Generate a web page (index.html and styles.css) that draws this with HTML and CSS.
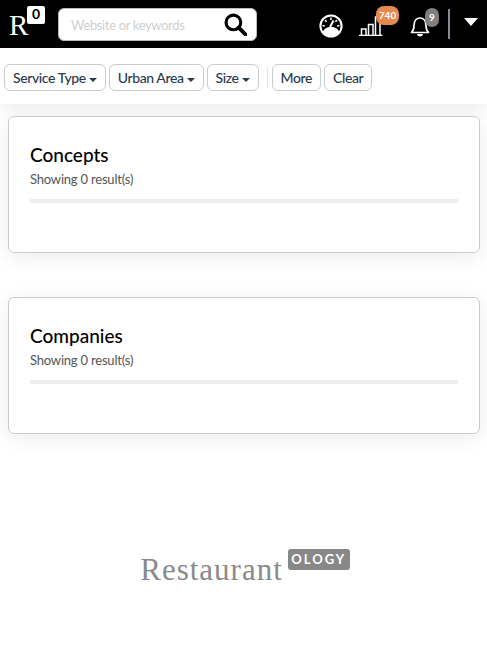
FILE: index.html
```html
<!DOCTYPE html>
<html lang="en">
<head>
    <meta charset="UTF-8">
    <meta name="viewport" content="width=device-width, initial-scale=1.0">
    <title>Restaurantology</title>
    <link rel="stylesheet" href="styles.css">
</head>
<body>
    <header class="topbar">
        <div class="brand">
            <span class="brand-letter">R</span>
            <span class="brand-count">0</span>
        </div>
        <div class="search">
            <span class="search-text">Website or keywords</span>
            <svg class="search-icon" width="23" height="23" viewBox="0 0 22 22">
                <circle cx="9" cy="9" r="7" fill="none" stroke="#000" stroke-width="3"/>
                <path d="M14 14l6.5 6.5" stroke="#000" stroke-width="3.6" stroke-linecap="round"/>
            </svg>
        </div>
        <div class="tools">
            <svg class="tool-gauge" width="24" height="24" viewBox="0 0 24 24">
                <circle cx="12" cy="12" r="10.6" fill="#000" stroke="#fff" stroke-width="2"/>
                <path d="M3.500 18.500C5 14.500 8 13 12 13s7 1.500 8.500 5.500C18 21.500 15 22.500 12 22.500S6 21.500 3.500 18.500z" fill="#fff"/>
                <path d="M12 3.500v2.500M6 6l1.500 1.800M18 6l-1.500 1.800M3.500 11.500l2.300.5M20.500 11.500l-2.300.5" stroke="#fff" stroke-width="1.500"/>
                <path d="M11 13l3.500-6.500" stroke="#fff" stroke-width="2"/>
            </svg>
            <div class="tool tool-bars">
                <svg width="24" height="20" viewBox="0 0 24 20">
                    <path d="M0 19.500h23.500" stroke="#fff" stroke-width="1.500"/>
                    <path d="M2.500 19v-6h4.500v6M9.500 19V8.500H14V19M16.500 19V1h4.500v18" fill="none" stroke="#fff" stroke-width="1.500"/>
                </svg>
                <span class="badge badge-orange">740</span>
            </div>
            <div class="tool tool-bell">
                <svg width="20" height="21" viewBox="0 0 20 21">
                    <path d="M1.500 16.500c2-2 2.500-3.500 2.500-7C4 5 6.500 2 10 2s6 3 6 7.500c0 3.500.5 5 2.500 7z" fill="none" stroke="#fff" stroke-width="1.700" stroke-linejoin="round"/>
                    <path d="M7 18h6c0 1.500-1.300 2.500-3 2.500S7 19.500 7 18z" fill="#fff"/>
                </svg>
                <span class="badge badge-grey">9</span>
            </div>
            <span class="tool-divider"></span>
            <span class="menu-caret"></span>
        </div>
    </header>

    <nav class="filters">
        <button class="filter">Service Type<span class="caret"></span></button>
        <button class="filter">Urban Area<span class="caret"></span></button>
        <button class="filter">Size<span class="caret"></span></button>
        <span class="filter-divider"></span>
        <button class="filter">More</button>
        <button class="filter">Clear</button>
    </nav>

    <main class="results">
        <section class="card">
            <h2>Concepts</h2>
            <p>Showing 0 result(s)</p>
            <div class="rule"></div>
        </section>
        <section class="card">
            <h2>Companies</h2>
            <p>Showing 0 result(s)</p>
            <div class="rule"></div>
        </section>
    </main>

    <footer class="logo">
        <span class="logo-word">Restaurant</span>
        <span class="logo-tag">OLOGY</span>
    </footer>
</body>
</html>
```

FILE: styles.css
```css
* {
    box-sizing: border-box;
}

body {
    margin: 0;
    font-family: Lato, "Noto Sans", sans-serif;
    background-color: #ffffff;
    color: #000;
}

.topbar {
    display: flex;
    align-items: flex-start;
    height: 48px;
    background: #000;
    padding: 6px 9px 0;
}

.brand {
    display: flex;
    align-items: flex-start;
    width: 36px;
    margin-right: 13px;
}

.brand-letter {
    width: 18px;
    margin-top: 4px;
    font-family: "Liberation Serif", serif;
    font-size: 29px;
    line-height: 30px;
    color: #fff;
}

.brand-count {
    width: 18px;
    height: 18px;
    background: #fff;
    border-radius: 2px;
    font-size: 14px;
    font-weight: 700;
    line-height: 16px;
    text-align: center;
}

.search {
    display: flex;
    flex-shrink: 0;
    align-items: center;
    justify-content: space-between;
    width: 199px;
    height: 33px;
    margin-top: 2px;
    padding: 0 9px 0 12px;
    background: #fff;
    border: 1px solid #bbb;
    border-radius: 6px;
}

.search-text {
    font-size: 13px;
    letter-spacing: -0.35px;
    color: #cfcfcf;
}

.tools {
    display: flex;
    align-items: flex-start;
    margin-left: 62px;
}

.tool-gauge {
    margin-top: 8px;
    margin-right: 16px;
}

.tool {
    position: relative;
    display: flex;
}

.tool-bars {
    margin-top: 10px;
    margin-right: 27px;
}

.tool-bell {
    margin-top: 10px;
    margin-right: 18px;
}

.badge {
    position: absolute;
    font-size: 10px;
    font-weight: 700;
    line-height: 19px;
    text-align: center;
    color: #fff;
}

.badge-orange {
    top: -10px;
    left: 17px;
    width: 23px;
    height: 19px;
    background: #e58a4e;
    border-radius: 8px;
}

.badge-grey {
    top: -8px;
    left: 15px;
    width: 14px;
    height: 19px;
    background: #808080;
    border-radius: 7px;
}

.tool-divider {
    width: 2px;
    height: 30px;
    margin-top: 3px;
    background: #8a8a96;
}

.menu-caret {
    width: 0;
    height: 0;
    margin-top: 12px;
    margin-left: 14px;
    border-top: 8px solid #fff;
    border-left: 7px solid transparent;
    border-right: 7px solid transparent;
}

.filters {
    display: flex;
    align-items: center;
    gap: 3px;
    height: 56px;
    padding: 2px 4px 0;
    background: #fff;
    box-shadow: 0 4px 16px rgba(0, 0, 0, 0.08);
}

.filter {
    display: flex;
    align-items: center;
    height: 27px;
    padding: 0 8px;
    background: #fff;
    border: 1px solid #ccc;
    border-radius: 6px;
    font-family: inherit;
    font-size: 14px;
    font-weight: 500;
    letter-spacing: -0.4px;
    color: #2b3a4d;
}

.caret {
    width: 0;
    height: 0;
    margin-top: 5px;
    margin-left: 3px;
    border-top: 4px solid #2b3a4d;
    border-left: 4.500px solid transparent;
    border-right: 4.500px solid transparent;
}

.filter-divider {
    width: 1px;
    height: 21px;
    margin: 0 1px 0 5px;
    background: #e4e4e4;
}

.results {
    display: flex;
    flex-direction: column;
    gap: 44px;
    padding: 12px 7px 0 8px;
}

.card {
    height: 137px;
    padding: 25px 21px 0;
    background: #fff;
    border: 1px solid #ccc;
    border-radius: 6px;
    box-shadow: 0 4px 20px rgba(0, 0, 0, 0.08);
}

.card h2 {
    margin: 0;
    font-size: 19px;
    font-weight: 500;
    line-height: 26px;
}

.card p {
    margin: 2px 0 0;
    font-size: 13px;
    letter-spacing: -0.2px;
    line-height: 18px;
    color: #555;
}

.rule {
    height: 4px;
    margin-top: 11px;
    background: #eeeeee;
}

.logo {
    display: flex;
    align-items: flex-start;
    justify-content: center;
    margin-top: 115px;
    padding-left: 3px;
}

.logo-word {
    margin-top: 3px;
    font-family: "Liberation Serif", serif;
    font-size: 31px;
    line-height: 36px;
    letter-spacing: 1px;
    color: #8a8a8a;
}

.logo-tag {
    margin-left: 5px;
    width: 62px;
    height: 21px;
    background: #888;
    border-radius: 3px;
    font-size: 13px;
    font-weight: 700;
    line-height: 20px;
    letter-spacing: 2px;
    text-align: center;
    color: #fff;
}
```
